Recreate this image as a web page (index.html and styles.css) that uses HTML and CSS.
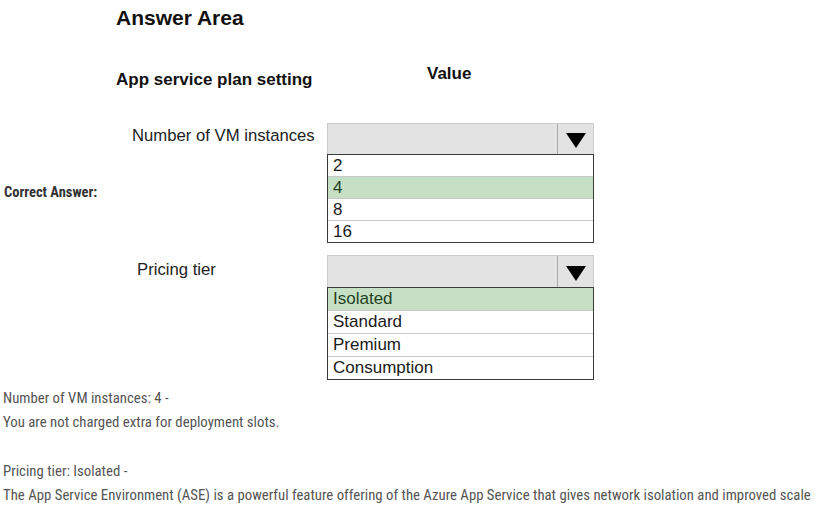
FILE: index.html
```html
<!DOCTYPE html>
<html>
<head>
<meta charset="utf-8">
<link rel="stylesheet" href="styles.css">
</head>
<body>
<div class="qa">
  <div class="qa-label">Correct Answer:</div>
  <div class="answer-img">
    <div class="title">Answer Area</div>
    <div class="heads">
      <div class="head head-setting">App service plan setting</div>
      <div class="head head-value">Value</div>
    </div>
    <div class="setting">
      <div class="setting-label label-vm">Number of VM instances</div>
      <div class="dropdown">
        <div class="dd-head">
          <div class="dd-field"></div>
          <div class="dd-arrow"><svg width="20" height="15" viewBox="0 0 20 15"><polygon points="0,0 20,0 10,15" fill="#000"/></svg></div>
        </div>
        <div class="dd-list">
          <div class="opt">2</div>
          <div class="opt opt-selected">4</div>
          <div class="opt">8</div>
          <div class="opt">16</div>
        </div>
      </div>
    </div>
    <div class="setting setting-second">
      <div class="setting-label label-tier">Pricing tier</div>
      <div class="dropdown dropdown-tall">
        <div class="dd-head">
          <div class="dd-field"></div>
          <div class="dd-arrow"><svg width="20" height="15" viewBox="0 0 20 15"><polygon points="0,0 20,0 10,15" fill="#000"/></svg></div>
        </div>
        <div class="dd-list">
          <div class="opt opt-selected">Isolated</div>
          <div class="opt">Standard</div>
          <div class="opt">Premium</div>
          <div class="opt">Consumption</div>
        </div>
      </div>
    </div>
  </div>
</div>
<div class="explanation">
  <p>Number of VM instances: 4 -<br>You are not charged extra for deployment slots.</p>
  <p>Pricing tier: Isolated -<br>The App Service Environment (ASE) is a powerful feature offering of the Azure App Service that gives network isolation and improved scale</p>
</div>
</body>
</html>
```
FILE: styles.css
```css
html, body {
  margin: 0;
  padding: 0;
  background: #ffffff;
}
body {
  width: 827px;
  height: 524px;
  overflow: hidden;
}
.qa {
  display: flex;
  align-items: center;
}
.qa-label {
  width: 96px;
  padding-left: 4px;
  font-family: "Roboto Condensed", Roboto, sans-serif;
  font-weight: 700;
  font-size: 14.5px;
  color: #333333;
  margin-top: -2px;
}
.answer-img {
  box-sizing: border-box;
  height: 386px;
  padding: 6px 0 0 16px;
  font-family: "Liberation Sans", Arial, sans-serif;
  color: #111111;
}
.title {
  font-size: 21px;
  font-weight: 700;
  line-height: 24px;
}
.heads {
  display: flex;
  margin-top: 34px;
  font-size: 17px;
  font-weight: 700;
  line-height: 20px;
}
.head-setting {
  width: 311px;
  padding-top: 6px;
}
.setting {
  display: flex;
  margin-top: 33px;
}
.setting-second {
  margin-top: 12px;
}
.setting-label {
  width: 211px;
  box-sizing: border-box;
  font-size: 16.7px;
  line-height: 26px;
  color: #222222;
}
.label-vm {
  padding-left: 16px;
}
.label-tier {
  padding-left: 21px;
  padding-top: 2px;
}
.dropdown {
  width: 267px;
}
.dd-head {
  display: flex;
  height: 31px;
  box-sizing: border-box;
  border: 1px solid #cbcbcb;
  border-bottom: none;
  background: #e3e3e3;
}
.dropdown-tall .dd-head {
  height: 32px;
}
.dd-field {
  flex: 1;
  border-right: 1px solid #a9a9a9;
}
.dd-arrow {
  width: 35px;
  display: flex;
  align-items: center;
  justify-content: center;
  padding-top: 3px;
  box-sizing: border-box;
}
.dd-arrow svg {
  display: block;
}
.dd-list {
  border: 1px solid #3a3a3a;
  background: #ffffff;
}
.opt {
  height: 22px;
  box-sizing: border-box;
  padding-left: 5px;
  font-size: 17px;
  line-height: 21px;
  color: #1a1a1a;
  border-top: 1px solid #c9c9c9;
}
.opt:first-child {
  border-top: none;
  height: 21px;
}
.dropdown-tall .opt {
  height: 23px;
  line-height: 22px;
}
.dropdown-tall .opt:first-child {
  height: 22px;
}
.opt-selected {
  background: #c5e0c4;
  color: #24401f;
}
.explanation {
  font-family: "Roboto Condensed", Roboto, sans-serif;
  font-size: 14.8px;
  line-height: 24.2px;
  color: #555555;
  padding-left: 3px;
}
.explanation p {
  margin: 0 0 24.2px 0;
}
```
